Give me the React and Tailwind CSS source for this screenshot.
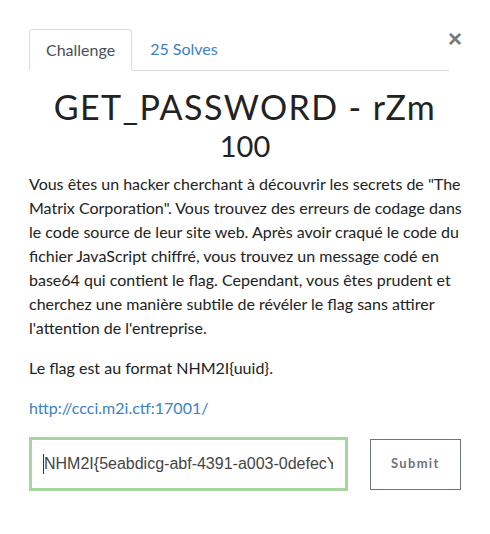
export default function App() {
  return (
    <div className="w-[490px] h-[534px] bg-white" style={{ fontFamily: "Lato, 'Noto Sans', sans-serif" }}>
      <div className="pt-[28px] px-[29px] relative">
        <button className="absolute right-[28px] top-[27px] text-[#777] text-[24px] font-bold leading-none" style={{ fontFamily: "'Liberation Sans', Arial, sans-serif" }}>×</button>
        <div className="flex items-end border-b border-[#ddd] w-[420px]">
          <div className="h-[42px] px-[16px] flex items-center border border-[#ddd] border-b-white rounded-t-[4px] -mb-px bg-white text-[16px] text-[#495057]">Challenge</div>
          <div className="h-[42px] px-[18px] flex items-center text-[16px] text-[#3a82c4]">25 Solves</div>
        </div>
        <h1 className="mt-[14px] text-center text-[34px] leading-[44px] tracking-[1.4px] text-[#222]" style={{ fontFamily: "Lato, sans-serif" }}>GET_PASSWORD - rZm</h1>
        <div className="text-center text-[29px] leading-[34px] text-[#222]">100</div>
        <div className="mt-[9px] text-[16px] leading-[24px] text-[#222] w-[436px]">
          <p>Vous êtes un hacker cherchant à découvrir les secrets de "The Matrix Corporation". Vous trouvez des erreurs de codage dans le code source de leur site web. Après avoir craqué le code du fichier JavaScript chiffré, vous trouvez un message codé en base64 qui contient le flag. Cependant, vous êtes prudent et cherchez une manière subtile de révéler le flag sans attirer l'attention de l'entreprise.</p>
          <p className="mt-[16px]">Le flag est au format NHM2I{"{uuid}"}.</p>
          <p className="mt-[16px]"><a className="text-[#3a82c4]">http://ccci.m2i.ctf:17001/</a></p>
        </div>
        <div className="mt-[17px] flex items-center">
          <div className="relative w-[321px] h-[54px]">
            <input
              readOnly
              defaultValue="NHM2I{5eabdicg-abf-4391-a003-0defecY"
              className="w-full h-full border-[3px] border-[#a6d69f] pl-[12px] pr-[12px] text-[16px] text-[#444] outline-none bg-white"
              style={{ fontFamily: "'Liberation Sans', Arial, sans-serif" }}
            />
            <span className="absolute left-[14px] top-[17px] w-px h-[20px] bg-[#333]"></span>
          </div>
          <button className="ml-[22px] w-[92px] h-[51px] border border-[#6c757d] text-[#6c757d] text-[13px] font-bold tracking-[1.3px]">Submit</button>
        </div>
      </div>
    </div>
  );
}
